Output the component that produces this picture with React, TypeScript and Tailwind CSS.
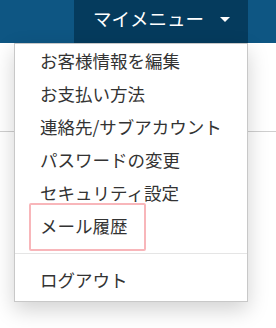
import React from 'react';

const MENU_ITEMS = [
  'お客様情報を編集',
  'お支払い方法',
  '連絡先/サブアカウント',
  'パスワードの変更',
  'セキュリティ設定',
  'メール履歴',
];

const App: React.FC = () => {
  return (
    <div
      className="relative w-[276px] h-[328px] bg-white overflow-hidden"
      style={{ fontFamily: '"Noto Sans CJK JP", "Noto Sans", sans-serif' }}
    >
      {/* top nav bar */}
      <div className="flex h-[43px] bg-[#0e5683]">
        <div className="w-[74px]" />
        <div className="w-[174px] bg-[#053b5d] flex items-center pl-[19px] pb-[6px] text-white text-[18.5px]">
          <span>マイメニュー</span>
          <span className="ml-[16px] mt-[2px] w-0 h-0 border-l-[5px] border-r-[5px] border-t-[5px] border-l-transparent border-r-transparent border-t-white" />
        </div>
      </div>

      {/* page content behind */}
      <div className="mt-[88px] h-px bg-[#cfcfcf]" />

      {/* dropdown */}
      <div className="absolute left-[14px] top-[43px] w-[234px] bg-white border border-[#c8c8c8] shadow-[0_8px_20px_rgba(0,0,0,0.18)] pb-[5px]">
        <ul>
          {MENU_ITEMS.map((label) => (
            <li key={label} className="h-[33px] pl-[25px] text-[17.5px] leading-[33px] text-[#333]">
              {label}
            </li>
          ))}
        </ul>
        <div className="mt-[11px] mb-[9px] h-px bg-[#e5e5e5]" />
        <div className="h-[33px] pl-[25px] text-[17.5px] leading-[33px] text-[#333]">ログアウト</div>

        {/* highlight box */}
        <div className="absolute left-[14px] top-[159px] w-[117px] h-[48px] border-2 border-[#f8b6ba] rounded-[2px]" />
      </div>
    </div>
  );
};

export default App;
